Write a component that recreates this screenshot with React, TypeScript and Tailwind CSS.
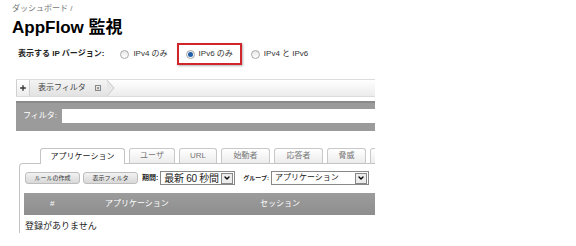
import { ChevronDown, Plus } from "lucide-react";

const tabs = ["ユーザ", "URL", "始動者", "応答者", "脅威", "…"];

function Radio({ checked }: { checked?: boolean }) {
  return (
    <span className="inline-flex h-[9px] w-[9px] items-center justify-center rounded-full border border-[#a8a8a8] bg-gradient-to-b from-[#e8e8e8] to-white">
      {checked && <span className="h-[5px] w-[5px] rounded-full bg-[#1f5fa8]" />}
    </span>
  );
}

function Select({ value, width, big }: { value: string; width: string; big?: boolean }) {
  return (
    <div className={`flex h-[14px] items-center border border-[#888] bg-white ${width}`}>
      <span className={`flex-1 overflow-hidden whitespace-nowrap pl-[3px] text-[#222] ${big ? "text-[10px] tracking-[-0.3px]" : "text-[8px]"}`}>
        {value}
      </span>
      <span className="mr-[1px] flex h-[11px] w-[12px] shrink-0 items-center justify-center border border-[#888] bg-[#ececec]">
        <ChevronDown className="h-[8px] w-[8px] text-black" strokeWidth={4} />
      </span>
    </div>
  );
}

export default function App() {
  return (
    <div
      className="h-[246px] w-[576px] overflow-hidden bg-white text-[#333]"
      style={{ fontFamily: "'Liberation Sans', 'Noto Sans CJK JP', sans-serif" }}
    >
      {/* header */}
      <div className="pl-[12px] pt-[3px] text-[8px] leading-[11px] text-[#777]">ダッシュボード /</div>
      <h1 className="mt-[5px] pl-[12px] text-[17px] font-bold leading-[18px] text-black">AppFlow 監視</h1>

      {/* ip version */}
      <div className="mt-[6px] flex h-[22px] items-center pl-[18px] text-[8px]">
        <span className="mr-[16px] font-bold text-[#222]">表示する IP バージョン:</span>
        <label className="flex items-center gap-[4px]">
          <Radio />
          <span>IPv4 のみ</span>
        </label>
        <label className="ml-[9px] flex h-[22px] items-center gap-[4px] border-2 border-[#d0262b] px-[7px] shadow-[1px_1px_2px_rgba(0,0,0,0.3)]">
          <Radio checked />
          <span>IPv6 のみ</span>
        </label>
        <label className="ml-[9px] flex items-center gap-[4px]">
          <Radio />
          <span>IPv4 と IPv6</span>
        </label>
      </div>

      <div className="ml-[16px] mt-[14px] w-[359px] overflow-hidden">
        {/* filter tab bar */}
        <div className="flex h-[18px] items-stretch border-y border-[#dcdcdc] bg-gradient-to-b from-white to-[#ececec]">
          <span className="flex w-[14px] items-center justify-center border-x border-[#d0d0d0]">
            <Plus className="h-[8px] w-[8px] text-[#333]" strokeWidth={4} />
          </span>
          <span className="flex items-center gap-[9px] bg-gradient-to-b from-[#f4f4f4] to-[#e2e2e2] pl-[8px] pr-[6px] text-[8px] text-[#444]">
            表示フィルタ
            <span className="flex h-[6px] w-[6px] items-center justify-center border border-[#888] text-[5px] leading-none">×</span>
          </span>
          <svg width="8" height="16" viewBox="0 0 8 16" className="self-center">
            <path d="M0 0 L7 8 L0 16 Z" fill="#e8e8e8" />
            <path d="M0 0 L7 8 L0 16" fill="none" stroke="#c8c8c8" />
          </svg>
        </div>

        {/* filter row */}
        <div className="mt-[4px] h-[30px] border-t-2 border-[#8a8a8a] bg-[#9b9b9b] pt-[6px]">
          <div className="flex h-[14px] items-center">
            <span className="w-[46px] pl-[7px] text-[8px] text-white">フィルタ:</span>
            <div className="h-[14px] flex-1 bg-white" />
          </div>
        </div>

        {/* tabs */}
        <div className="mt-[17px] flex items-end pl-[24px]">
          <div className="z-10 -mb-px flex h-[16px] w-[85px] shrink-0 items-center justify-center whitespace-nowrap rounded-t-[3px] border border-b-0 border-[#c4c4c4] bg-white text-[8px] text-[#222]">
            アプリケーション
          </div>
          {tabs.map((t, i) => (
            <div
              key={t}
              className={`ml-[4px] flex h-[15px] shrink-0 items-center justify-center whitespace-nowrap rounded-t-[3px] border border-b-0 border-[#c8c8c8] bg-gradient-to-b from-white to-[#ececec] text-[8px] text-[#777] ${
                ["w-[46px]", "w-[38px]", "w-[49px]", "w-[49px]", "w-[39px]", "w-[20px]"][i]
              }`}
            >
              {t === "…" ? "" : t}
            </div>
          ))}
        </div>

        {/* panel */}
        <div className="ml-[3px] h-[70px] rounded-tl-[4px] border-l border-t border-[#c4c4c4] pl-[5px] pt-[7px]">
          <div className="flex items-center text-[7px]">
            <button className="flex h-[12px] w-[55px] items-center justify-center rounded-[3px] border border-[#bdbdbd] bg-gradient-to-b from-[#f2f2f2] to-[#d8d8d8] text-[6px] text-[#333]">
              ルールの作成
            </button>
            <button className="ml-[3px] flex h-[12px] w-[55px] items-center justify-center rounded-[3px] border border-[#bdbdbd] bg-gradient-to-b from-[#f2f2f2] to-[#d8d8d8] text-[6px] text-[#333]">
              表示フィルタ
            </button>
            <span className="ml-[4px] mr-[2px] font-bold text-[#222]">期間:</span>
            <Select value="最新 60 秒間" width="w-[75px]" big />
            <span className="ml-[8px] mr-[2px] text-[6px] font-bold text-[#222]">グループ:</span>
            <Select value="アプリケーション" width="w-[98px]" />
          </div>

          <div className="mt-[8px] -ml-px flex h-[22px] items-center bg-gradient-to-b from-[#9c9c9c] to-[#8e8e8e] text-[8px] text-white">
            <span className="w-[81px] pl-[26px]">#</span>
            <span className="w-[155px]">アプリケーション</span>
            <span>セッション</span>
          </div>
          <div className="pt-[5px] text-[9px] text-[#222]">登録がありません</div>
        </div>
      </div>
    </div>
  );
}
